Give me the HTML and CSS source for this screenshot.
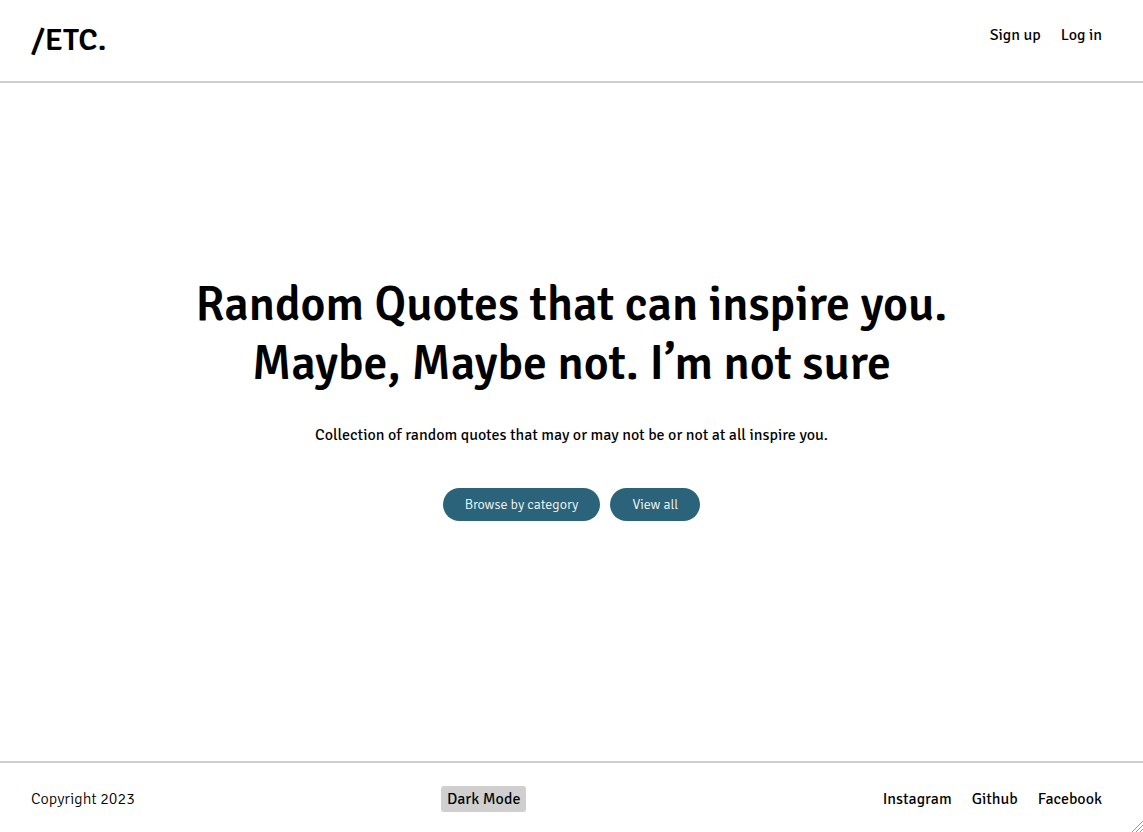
FILE: index.html
```html
<!DOCTYPE html>
<html lang="en">
<head>
<meta charset="utf-8">
<title>/ETC.</title>
<link rel="stylesheet" href="styles.css">
</head>
<body>
<header class="site-header">
  <a class="logo" href="#">/ETC.</a>
  <nav class="links"><a href="#">Sign up</a><a href="#">Log in</a></nav>
</header>
<main class="hero">
  <h1 class="title">Random Quotes that can inspire you. Maybe, Maybe not. I’m not sure</h1>
  <p class="lead">Collection of random quotes that may or may not be or not at all inspire you.</p>
  <div class="actions">
    <button class="pill" type="button">Browse by category</button>
    <button class="pill" type="button">View all</button>
  </div>
</main>
<footer class="site-footer">
  <p class="copyright">Copyright 2023</p>
  <button class="mode" type="button">Dark Mode</button>
  <nav class="links"><a href="#">Instagram</a><a href="#">Github</a><a href="#">Facebook</a></nav>
</footer>
<svg class="grip" viewBox="0 0 11 11" aria-hidden="true"><path d="M0 11 11 0M4 11l7-7M8 11l3-3"/></svg>
</body>
</html>
```
FILE: styles.css
```css
* { box-sizing: border-box; }
body {
  margin: 0;
  min-height: 100vh;
  display: flex;
  flex-direction: column;
  background: #fff;
  color: #000;
  font-family: "Signika Negative", "Open Sans", "Noto Sans", sans-serif;
  font-size: 16px;
  line-height: 20px;
}
a { color: inherit; text-decoration: none; }
.site-header {
  display: flex;
  justify-content: space-between;
  padding: 20px 41px 21px 31px;
  border-bottom: 2px solid #cfcfcf;
}
.logo { font-size: 32px; line-height: 40px; font-weight: 600; }
.links { display: flex; gap: 20px; padding-top: 5px; }
.hero {
  flex: 1;
  display: flex;
  flex-direction: column;
  align-items: center;
  justify-content: center;
  text-align: center;
  padding: 0 20px 48px;
}
.title { margin: 0; max-width: 800px; font-size: 48px; line-height: 59px; font-weight: 600; }
.lead { margin: 32px 0 43px; }
.actions { display: flex; gap: 10px; }
.pill {
  padding: 7px 22px 6px;
  border: 0;
  border-radius: 20px;
  background: #2a637a;
  color: #fff;
  font: inherit;
  font-size: 14px;
  font-weight: 300;
}
.site-footer {
  display: flex;
  justify-content: space-between;
  align-items: center;
  padding: 23px 41px 20px 31px;
  border-top: 2px solid #cfcfcf;
}
.copyright { margin: 0; font-weight: 300; }
.mode {
  height: 26px;
  padding: 0 6px;
  border: 0;
  border-radius: 3px;
  background: #cfcfcf;
  color: #000;
  font: inherit;
}
.site-footer .links { padding: 0 0 0 50px; }
.grip { position: absolute; right: 0; bottom: 0; width: 11px; height: 11px; fill: none; stroke: #999; }
```
